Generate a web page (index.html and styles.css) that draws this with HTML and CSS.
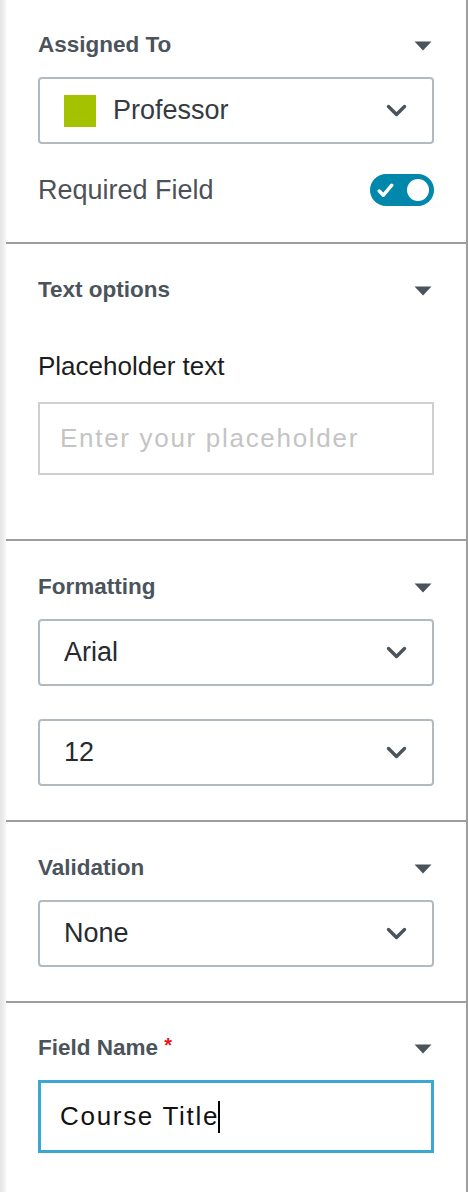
FILE: index.html
```html
<!DOCTYPE html>
<html lang="en">
<head>
<meta charset="utf-8">
<title>Field properties</title>
<link rel="stylesheet" href="styles.css">
</head>
<body>
<div class="page">
  <div class="edge"></div>
  <div class="panel">
    <section class="section first">
      <div class="head">
        <span class="title">Assigned To</span>
        <svg class="caret" width="18" height="10" viewBox="0 0 18 10"><path d="M0.5 0.5h17L9 9.5z" fill="#4b535b"/></svg>
      </div>
      <div class="select">
        <span class="swatch"></span>
        <span class="value prof">Professor</span>
        <svg class="chev" width="21" height="13" viewBox="0 0 21 13"><path d="M2.5 2.5L10.5 10.5L18.5 2.5" fill="none" stroke="#4b535b" stroke-width="3.4" stroke-linecap="round" stroke-linejoin="round"/></svg>
      </div>
      <div class="req">
        <span class="req-label">Required Field</span>
        <span class="toggle">
          <svg class="check" width="17" height="15" viewBox="0 0 17 15"><path d="M2.2 8L6.4 12.2L14.8 2.2" fill="none" stroke="#fff" stroke-width="3.4" stroke-linecap="round" stroke-linejoin="round"/></svg>
          <span class="knob"></span>
        </span>
      </div>
    </section>

    <section class="section tall">
      <div class="head">
        <span class="title">Text options</span>
        <svg class="caret" width="18" height="10" viewBox="0 0 18 10"><path d="M0.5 0.5h17L9 9.5z" fill="#4b535b"/></svg>
      </div>
      <div class="label">Placeholder text</div>
      <div class="input">
        <span class="ph">Enter your placeholder</span>
      </div>
    </section>

    <section class="section">
      <div class="head">
        <span class="title">Formatting</span>
        <svg class="caret" width="18" height="10" viewBox="0 0 18 10"><path d="M0.5 0.5h17L9 9.5z" fill="#4b535b"/></svg>
      </div>
      <div class="select">
        <span class="value">Arial</span>
        <svg class="chev" width="21" height="13" viewBox="0 0 21 13"><path d="M2.5 2.5L10.5 10.5L18.5 2.5" fill="none" stroke="#4b535b" stroke-width="3.4" stroke-linecap="round" stroke-linejoin="round"/></svg>
      </div>
      <div class="select second">
        <span class="value">12</span>
        <svg class="chev" width="21" height="13" viewBox="0 0 21 13"><path d="M2.5 2.5L10.5 10.5L18.5 2.5" fill="none" stroke="#4b535b" stroke-width="3.4" stroke-linecap="round" stroke-linejoin="round"/></svg>
      </div>
    </section>

    <section class="section">
      <div class="head">
        <span class="title">Validation</span>
        <svg class="caret" width="18" height="10" viewBox="0 0 18 10"><path d="M0.5 0.5h17L9 9.5z" fill="#4b535b"/></svg>
      </div>
      <div class="select">
        <span class="value">None</span>
        <svg class="chev" width="21" height="13" viewBox="0 0 21 13"><path d="M2.5 2.5L10.5 10.5L18.5 2.5" fill="none" stroke="#4b535b" stroke-width="3.4" stroke-linecap="round" stroke-linejoin="round"/></svg>
      </div>
    </section>

    <section class="section last">
      <div class="head">
        <span class="title">Field Name <span class="star">*</span></span>
        <svg class="caret" width="18" height="10" viewBox="0 0 18 10"><path d="M0.5 0.5h17L9 9.5z" fill="#4b535b"/></svg>
      </div>
      <div class="input focus">
        <span class="typed">Course Title</span><span class="cursor"></span>
      </div>
    </section>
  </div>
</div>
</body>
</html>
```

FILE: styles.css
```css
* { box-sizing: border-box; }
html, body { margin: 0; padding: 0; background: #fff; }
body {
  font-family: "Liberation Sans", Arial, sans-serif;
  width: 468px;
  height: 1192px;
  overflow: hidden;
}
.page {
  display: flex;
  height: 1192px;
}
.edge {
  width: 6px;
  flex: none;
  background: linear-gradient(to right, #e3e3e3, #f6f6f6);
}
.panel {
  flex: 1;
  border-right: 2px solid #9d9d9d;
  background: #fff;
}
.section {
  padding: 33px 32px 34px 32px;
  border-bottom: 2px solid #9d9d9d;
}
.section.first { padding-top: 32px; padding-bottom: 36px; }
.section.tall { padding-bottom: 64px; }
.section.last { border-bottom: none; padding-top: 32px; }
.head {
  display: flex;
  justify-content: space-between;
  align-items: center;
  height: 26px;
  margin-bottom: 19px;
}
.title {
  font-size: 22.5px;
  line-height: 26px;
  font-weight: bold;
  color: #4b535b;
}
.star { color: #e8161b; font-size: 20px; position: relative; top: -3px; }
.caret { margin-right: 2px; margin-top: 2px; }
.select {
  display: flex;
  align-items: center;
  height: 67px;
  border: 2px solid #b2bac1;
  border-radius: 4px;
  padding: 0 25px 0 24px;
}
.select.second { margin-top: 33px; }
.swatch {
  width: 32px;
  height: 32px;
  background: #a5c200;
  margin-right: 17px;
  flex: none;
}
.value {
  flex: 1;
  font-size: 27px;
  color: #262b30;
}
.value.prof { color: #353b41; }
.chev { flex: none; }
.req {
  display: flex;
  justify-content: space-between;
  align-items: center;
  margin-top: 30px;
}
.req-label {
  font-size: 27px;
  color: #4d5257;
}
.toggle {
  width: 64px;
  height: 32px;
  border-radius: 16px;
  background: #0187ab;
  display: flex;
  align-items: center;
  justify-content: space-between;
  padding: 0 5px 0 7px;
}
.knob {
  width: 22px;
  height: 22px;
  border-radius: 50%;
  background: #fff;
}
.label {
  margin-top: 48px;
  font-size: 26px;
  line-height: 30px;
  color: #1d1d1d;
}
.input {
  margin-top: 21px;
  height: 73px;
  border: 2px solid #d0d0d0;
  display: flex;
  align-items: center;
  padding-left: 20px;
  font-size: 26px;
  letter-spacing: 1.7px;
}
.ph { color: #c4c4c4; }
.input.focus {
  margin-top: 0;
  border: 3px solid #3aa8d0;
  padding-left: 19px;
}
.typed { color: #111; }
.cursor {
  width: 2px;
  height: 32px;
  background: #000;
  margin-left: -1px;
}
```
